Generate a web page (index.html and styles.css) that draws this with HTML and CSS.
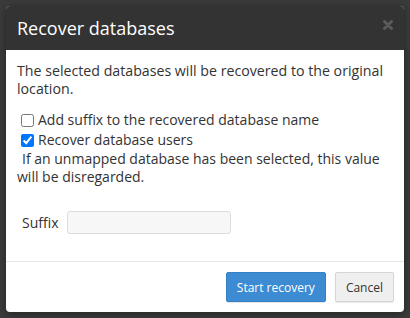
FILE: index.html
```html
<!DOCTYPE html>
<html lang="en">
<head>
  <meta charset="UTF-8">
  <meta name="viewport" content="width=device-width, initial-scale=1.0">
  <title>Recover databases</title>
  <link rel="stylesheet" href="styles.css">
</head>
<body>
  <div class="modal">
    <div class="modal-header">
      <h3>Recover databases</h3>
      <svg class="modal-close" width="10" height="10" viewBox="0 0 10 10" aria-label="Close">
        <path d="M1.5 1.5 L8.5 8.5 M8.5 1.5 L1.5 8.5" stroke="currentColor" stroke-width="3" stroke-linecap="round"/>
      </svg>
    </div>
    <div class="modal-body">
      <p class="lead">The selected databases will be recovered to the original location.</p>
      <label class="check-row">
        <input type="checkbox" name="suffix">
        <span>Add suffix to the recovered database name</span>
      </label>
      <label class="check-row">
        <input type="checkbox" name="users" checked>
        <span>Recover database users</span>
      </label>
      <p class="help-text"><span class="indent">If an unmapped database has been selected, this value</span> will be disregarded.</p>
      <div class="form-row">
        <label for="suffix">Suffix</label>
        <input type="text" id="suffix" class="text-input">
      </div>
    </div>
    <div class="modal-footer">
      <button class="btn btn-primary">Start recovery</button>
      <button class="btn">Cancel</button>
    </div>
  </div>
</body>
</html>
```

FILE: styles.css
```css
:root {
  --main-font: "Open Sans", "Liberation Sans", sans-serif;
  --text-color: #333333;
  --overlay-color: #3b3b3b;
  --header-color: #333333;
  --primary-color: #3c8bd3;
  --border-color: #e5e5e5;
}

html {
  box-sizing: border-box;
  font-family: var(--main-font);
  font-size: 14px;
}

*,
*::before,
*::after {
  box-sizing: inherit;
}

body {
  margin: 0;
  background-color: var(--overlay-color);
  color: var(--text-color);
}

.modal {
  width: 398px;
  margin: 6px;
  background-color: #fff;
  border-radius: 4px;
  overflow: hidden;
  box-shadow: 0 2px 8px rgba(0, 0, 0, 0.4);
}

.modal-header {
  height: 44px;
  padding: 0 11px;
  display: flex;
  align-items: center;
  justify-content: space-between;
  background-color: var(--header-color);
}

.modal-header h3 {
  margin: 0;
  font-size: 18px;
  font-weight: 400;
  color: #fff;
}

.modal-close {
  color: #5a5a5a;
  margin-top: -6px;
}

.modal-body {
  padding: 12px 11px 27px;
  line-height: 18px;
}

.modal-body p {
  margin: 0 0 12px;
}

.modal-body .lead {
  font-size: 14.2px;
}

.check-row {
  display: flex;
  align-items: center;
  height: 20px;
  line-height: 20px;
}

.check-row input {
  width: 13px;
  height: 13px;
  margin: 0 4px 0 4px;
}

.modal-body .help-text {
  margin: 0 0 26px;
  line-height: 17.5px;
}

.indent {
  padding-left: 5px;
}

.form-row {
  display: flex;
  align-items: center;
  gap: 8px;
  padding-left: 5px;
}

.text-input {
  width: 164px;
  height: 23px;
  border: 1px solid #dcdcdc;
  border-radius: 3px;
  background-color: #f7f7f7;
}

.modal-footer {
  display: flex;
  justify-content: flex-end;
  gap: 9px;
  padding: 10px 10px 10px 11px;
  border-top: 1px solid var(--border-color);
}

.btn {
  height: 30px;
  padding: 0 10px;
  font-family: var(--main-font);
  font-size: 12px;
  color: var(--text-color);
  background-color: #efefef;
  border: 1px solid #d6d6d6;
  border-radius: 2px;
  box-shadow: 0 1px 1px rgba(0, 0, 0, 0.1);
}

.btn-primary {
  color: #fff;
  background-color: var(--primary-color);
  border-color: #3580c5;
}
```
